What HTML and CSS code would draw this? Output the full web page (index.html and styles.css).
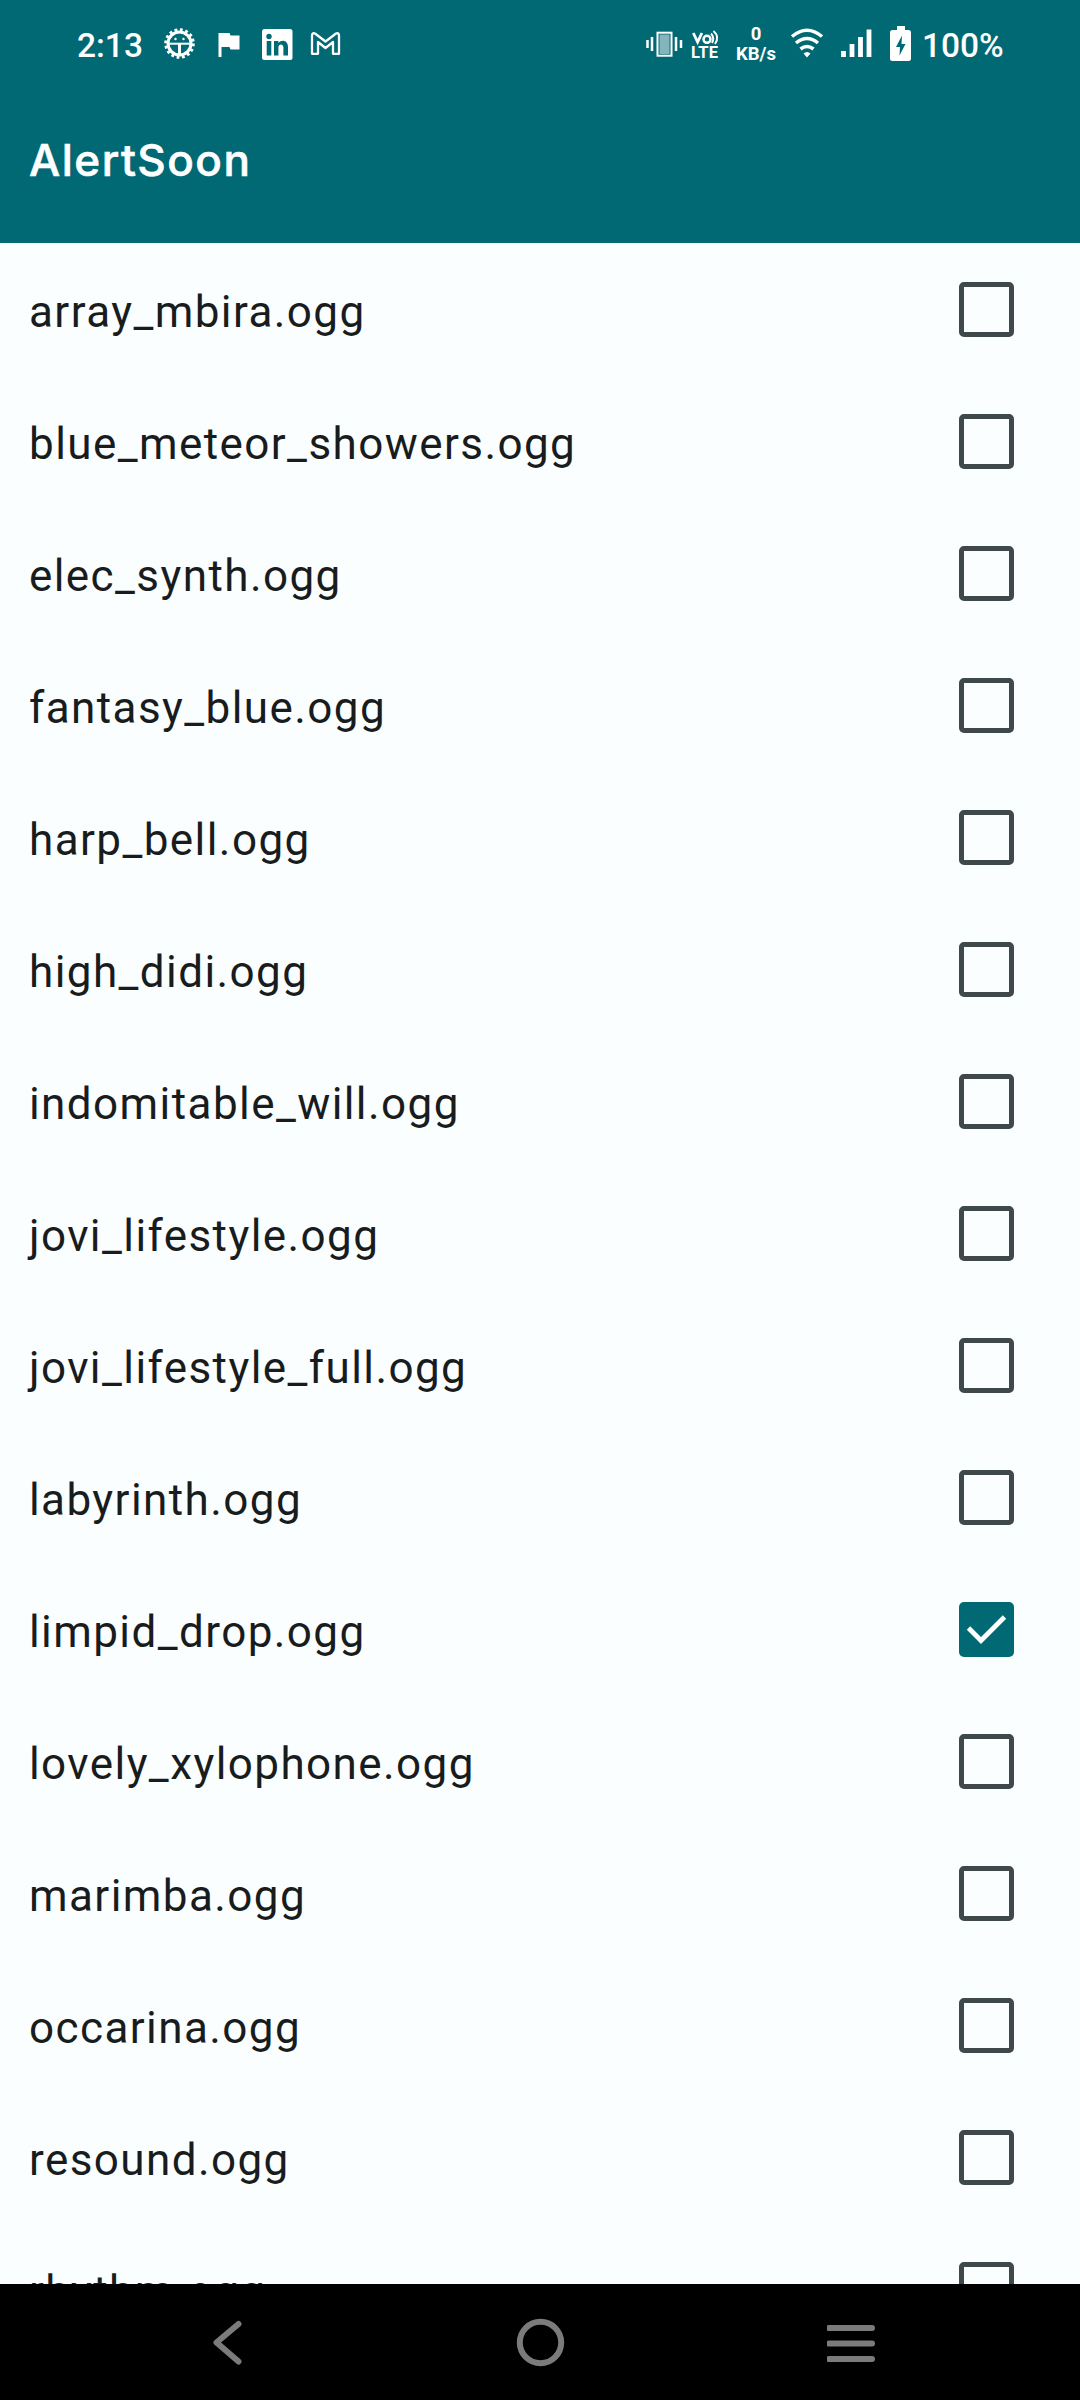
FILE: index.html
```
<!DOCTYPE html>
<html lang="en">
<head>
<meta charset="utf-8">
<title>AlertSoon</title>
<link rel="stylesheet" href="styles.css">
</head>
<body>
<div class="screen">
<header class="header">
<div class="status">
<span class="clock">2:13</span>
<svg class="notices" width="190" height="50" viewBox="0 0 190 50" fill="none" stroke="#fff">
<circle cx="19.500" cy="24.500" r="11.500" stroke-width="3"/>
<circle cx="19.500" cy="24.500" r="13.800" stroke-width="3" stroke-dasharray="2.800 2.620"/>
<path d="M9 24.700h21" stroke-width="2"/><path d="M19.500 24.500v11" stroke-width="3"/>
<circle cx="15.500" cy="20" r="1.200" fill="#fff" stroke="none"/><circle cx="23.500" cy="20" r="1.200" fill="#fff" stroke="none"/>
<path d="M58.500 14h11l1 2.500h9v14h-9l-1-2.500h-8v10h-3z" fill="#fff" stroke="none"/>
<rect x="102" y="10" width="30.500" height="31" rx="2.500" fill="#fff" stroke="none"/>
<g fill="#006974" stroke="none"><circle cx="109" cy="17.500" r="2.700"/><path d="M106.700 22h4.600v14.500h-4.600zM114 22h4.400v2c3-4 9.600-3 9.600 4v8.500h-4.600v-8c0-4-5-4-5 0v8H114z"/></g>
<path d="M152 34.800V16.500q0-3 3-2l10.500 8 10.500-8q3-1 3 2v18.300h-6V23l-7.500 6-7.500-6v11.800z" stroke-width="2.300" stroke-linejoin="round"/>
</svg>
<svg class="phone" width="90" height="50" viewBox="0 0 90 50" fill="none" stroke="#fff">
<path d="M3.500 21v8M8 18v14M32 18v14M37 21v8" stroke-width="2.500"/>
<rect x="13.500" y="13.700" width="14" height="23" stroke-width="2"/>
<rect x="15.500" y="15.500" width="10" height="19.500" fill="#84b5bc" stroke="none"/>
<path d="M49.300 14l4.300 9 4.300-9" stroke-width="2.800"/><circle cx="63" cy="20.300" r="3.500" stroke-width="2.500"/>
<path d="M67 14.500q4 4.500 1 9.500M69.500 12q6.500 6 1.500 13" stroke-width="1.900"/>
<text class="lte" x="47" y="39" textLength="27">LTE</text>
</svg>
<div class="speed"><span>0</span><span>KB/s</span></div>
<svg class="signals" width="130" height="50" viewBox="0 0 130 50" fill="none" stroke="#fff">
<path d="M2 17.500Q17 5 32 17.500M6 24Q17 15 28 24M10.500 30Q17 25 23.500 30" stroke-width="3.500"/>
<path d="M13.500 34.500q3.500-3 7 0l-3.500 4z" fill="#fff" stroke="none"/>
<path d="M53.500 32v6M62 25v13M70.500 18v20M79 10.500v27.500" stroke-width="4.800"/>
<path d="M107 7h8v4h3.500q2.500 0 2.500 2.500v26q0 2.500-2.500 2.500h-16q-2.500 0-2.500-2.500v-26q0-2.500 2.500-2.500h4.500z" fill="#fff" stroke="none"/>
<path d="M112 16.500l-6 11.500h4l-.500 8.500 6-11.500h-4z" fill="#006974" stroke="none"/>
</svg>
<span class="percent">100%</span>
</div>
<h1 class="title">AlertSoon</h1>
</header>
<main class="list">
<label class="row"><span class="name">array_mbira.ogg</span><input class="box" type="checkbox"></label>
<label class="row"><span class="name">blue_meteor_showers.ogg</span><input class="box" type="checkbox"></label>
<label class="row"><span class="name">elec_synth.ogg</span><input class="box" type="checkbox"></label>
<label class="row"><span class="name">fantasy_blue.ogg</span><input class="box" type="checkbox"></label>
<label class="row"><span class="name">harp_bell.ogg</span><input class="box" type="checkbox"></label>
<label class="row"><span class="name">high_didi.ogg</span><input class="box" type="checkbox"></label>
<label class="row"><span class="name">indomitable_will.ogg</span><input class="box" type="checkbox"></label>
<label class="row"><span class="name">jovi_lifestyle.ogg</span><input class="box" type="checkbox"></label>
<label class="row"><span class="name">jovi_lifestyle_full.ogg</span><input class="box" type="checkbox"></label>
<label class="row"><span class="name">labyrinth.ogg</span><input class="box" type="checkbox"></label>
<label class="row"><span class="name">limpid_drop.ogg</span><span class="box checked"><svg width="55" height="55" viewBox="0 0 55 55" fill="none" stroke="#fff" stroke-width="4.800"><path d="M9.500 26L22 38.500 45.500 15"/></svg></span></label>
<label class="row"><span class="name">lovely_xylophone.ogg</span><input class="box" type="checkbox"></label>
<label class="row"><span class="name">marimba.ogg</span><input class="box" type="checkbox"></label>
<label class="row"><span class="name">occarina.ogg</span><input class="box" type="checkbox"></label>
<label class="row"><span class="name">resound.ogg</span><input class="box" type="checkbox"></label>
<label class="row"><span class="name">rhythm.ogg</span><input class="box" type="checkbox"></label>
</main>
<nav class="nav">
<svg width="50" height="60" viewBox="0 0 50 60"><path d="M35.500 12L13.500 30.500 35.500 49.500"/></svg>
<svg width="50" height="60" viewBox="0 0 50 60"><circle cx="25.500" cy="30.500" r="20.700"/></svg>
<svg width="50" height="60" viewBox="0 0 50 60"><path d="M2 16h43M2 31.500h43M2 47h43"/></svg>
</nav>
</div>
</body>
</html>
```
FILE: styles.css
```
body { margin: 0; }
.screen { width: 1080px; height: 2400px; display: flex; flex-direction: column; overflow: hidden; background: #fafeff; font-family: Roboto, sans-serif; }
.header { height: 243px; flex: none; background: #006974; color: #fff; }
.status { height: 88px; display: flex; align-items: center; padding-left: 77px; font-weight: 500; font-size: 33.500px; }
.clock { width: 67px; margin-top: 3px; white-space: nowrap; }
.notices { margin-left: 16px; }
.phone { margin-left: 294px; }
.speed { width: 42px; margin-left: 1px; display: flex; flex-direction: column; align-items: center; font-size: 18.500px; line-height: 20.500px; font-weight: 700; }
.signals { margin-left: 13px; }
.lte { font: 700 16.500px Roboto, sans-serif; fill: #fff; stroke: none; }
.percent { margin-left: 2px; margin-top: 3px; }
.title { margin: 44px 0 0 29px; font: 500 44px/56px Inter, sans-serif; letter-spacing: 1.500px; -webkit-text-stroke: .6px #fff; }
.list { flex: 1; min-height: 0; overflow: hidden; background: #fafeff; }
.row { height: 132px; display: flex; align-items: center; justify-content: space-between; padding: 0 66px 0 29px; box-sizing: border-box; }
.name { padding-top: 6px; font-size: 44px; letter-spacing: 1.420px; color: #191c1d; }
.box { appearance: none; width: 55px; height: 55px; margin: 1px 0 0; box-sizing: border-box; border: 5px solid #3f484a; border-radius: 5px; flex: none; }
.checked { border: 0; background: #006974; }
.checked svg { display: block; }
.nav { height: 116px; flex: none; display: grid; grid-template-columns: repeat(3, 50px); gap: 262px; padding: 28px 0 0 203px; box-sizing: border-box; background: #000; }
.nav svg { fill: none; stroke: #7b7b7b; stroke-width: 6; stroke-linecap: round; stroke-linejoin: round; }
```
